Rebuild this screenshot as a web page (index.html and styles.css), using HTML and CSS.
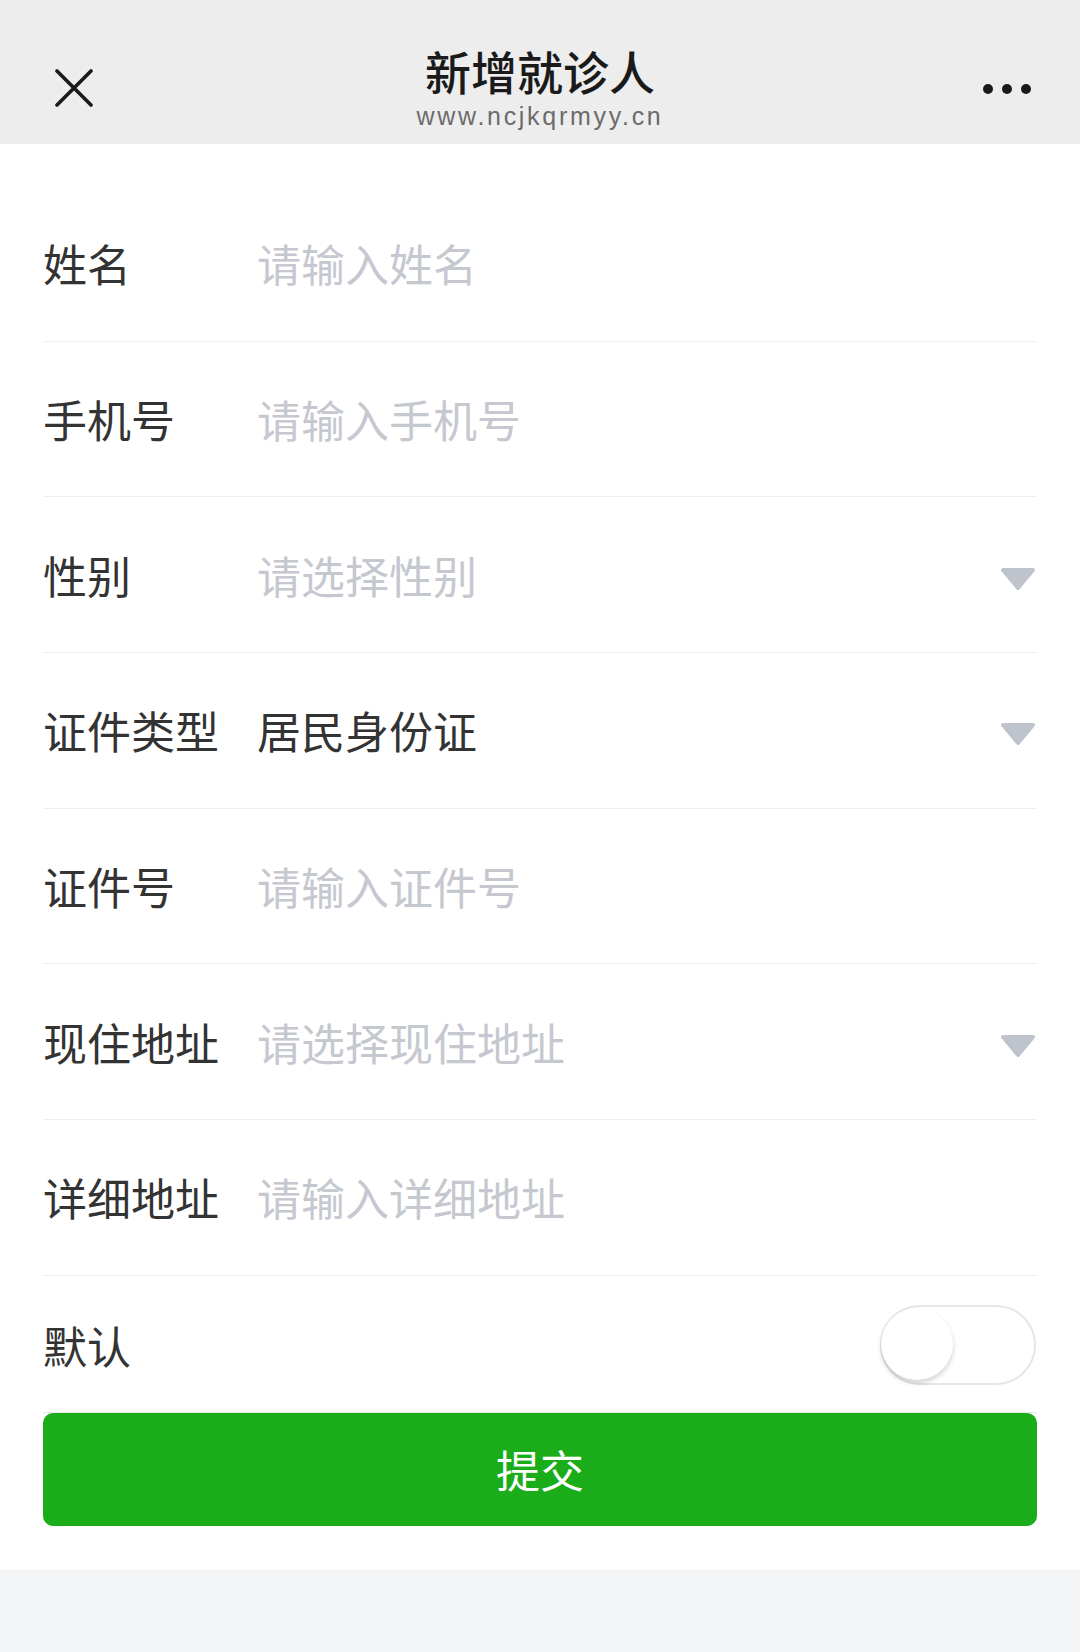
FILE: index.html
```html
<!DOCTYPE html>
<html lang="zh-CN">
<head>
    <meta charset="UTF-8">
    <meta name="viewport" content="width=device-width, initial-scale=1.0">
    <title>新增就诊人</title>
    <link rel="stylesheet" href="styles.css">
</head>
<body>
    <header class="nav">
        <div class="nav-left">
            <svg class="icon-close" width="38" height="38" viewBox="0 0 38 38">
                <path d="M2 2 L36 36 M36 2 L2 36" stroke="#1a1a1a" stroke-width="3.6" stroke-linecap="round" fill="none"/>
            </svg>
        </div>
        <div class="nav-title">
            <div class="title">新增就诊人</div>
            <div class="url">www.ncjkqrmyy.cn</div>
        </div>
        <div class="nav-right">
            <span class="dot"></span><span class="dot"></span><span class="dot"></span>
        </div>
    </header>

    <main class="page">
        <form class="form">
            <div class="row">
                <label class="label">姓名</label>
                <div class="value placeholder">请输入姓名</div>
            </div>
            <div class="row">
                <label class="label">手机号</label>
                <div class="value placeholder">请输入手机号</div>
            </div>
            <div class="row">
                <label class="label">性别</label>
                <div class="value placeholder">请选择性别</div>
                <svg class="arrow" width="36" height="24" viewBox="0 0 36 24"><path d="M3 3 L33 3 L18 21 Z"/></svg>
            </div>
            <div class="row">
                <label class="label">证件类型</label>
                <div class="value">居民身份证</div>
                <svg class="arrow" width="36" height="24" viewBox="0 0 36 24"><path d="M3 3 L33 3 L18 21 Z"/></svg>
            </div>
            <div class="row">
                <label class="label">证件号</label>
                <div class="value placeholder">请输入证件号</div>
            </div>
            <div class="row">
                <label class="label">现住地址</label>
                <div class="value placeholder">请选择现住地址</div>
                <svg class="arrow" width="36" height="24" viewBox="0 0 36 24"><path d="M3 3 L33 3 L18 21 Z"/></svg>
            </div>
            <div class="row">
                <label class="label">详细地址</label>
                <div class="value placeholder">请输入详细地址</div>
            </div>
            <div class="row row-switch">
                <label class="label">默认</label>
                <div class="value"></div>
                <div class="switch"><span class="knob"></span></div>
            </div>
            <button type="button" class="submit">提交</button>
        </form>
    </main>
</body>
</html>
```

FILE: styles.css
```css
body {
    margin: 0;
    background-color: #f4f5f7;
    font-family: "Noto Sans CJK SC", "Noto Sans", sans-serif;
}
.nav {
    display: grid;
    grid-template-columns: 1fr auto 1fr;
    align-items: center;
    height: 144px;
    box-sizing: border-box;
    padding-top: 32px;
    background-color: #ededed;
}
.nav-left {
    padding-left: 55px;
    display: flex;
}
.nav-title {
    align-self: start;
    margin-top: 12px;
    text-align: center;
}
.title {
    font-size: 46px;
    font-weight: 500;
    line-height: 52px;
    color: #1a1a1a;
}
.url {
    font-family: "Liberation Sans", Arial, sans-serif;
    font-size: 25px;
    letter-spacing: 2.7px;
    line-height: 40px;
    color: #6b6b6b;
}
.nav-right {
    display: flex;
    justify-content: flex-end;
    gap: 9px;
    padding-right: 49px;
    padding-top: 1px;
}
.dot {
    width: 10px;
    height: 10px;
    border-radius: 50%;
    background-color: #1a1a1a;
}
.page {
    background-color: white;
}
.form {
    margin: 0;
    padding: 42px 43px 44px;
}
.row {
    display: flex;
    align-items: center;
    height: 155.7px;
    box-sizing: border-box;
    border-bottom: 1px solid #eeeff3;
}
.label {
    width: 214px;
    flex-shrink: 0;
    font-size: 44px;
    color: #333;
}
.value {
    flex: 1;
    font-size: 44px;
    color: #333;
}
.placeholder {
    color: #c5c8cf;
}
.arrow {
    fill: #bfc3cb;
    stroke: #bfc3cb;
    stroke-width: 4;
    stroke-linejoin: round;
    margin-right: 1px;
    margin-top: 8px;
}
.row-switch {
    height: 137px;
    padding-top: 2px;
    border-bottom-color: #e8eaf0;
}
.switch {
    display: flex;
    align-items: flex-start;
    width: 156px;
    height: 80px;
    box-sizing: border-box;
    border: 2px solid #e6e6e6;
    border-radius: 40px;
    margin-right: 1px;
    margin-top: 0;
}
.knob {
    width: 72px;
    height: 72px;
    margin-left: -1px;
    margin-top: 1px;
    border-radius: 50%;
    background-color: white;
    box-shadow: 0 3px 5px rgba(0, 0, 0, 0.18);
}
.submit {
    display: block;
    width: 100%;
    height: 113px;
    border: none;
    border-radius: 10px;
    background-color: #1aad19;
    color: white;
    font-family: "Noto Sans CJK SC", "Noto Sans", sans-serif;
    font-size: 44px;
    cursor: pointer;
}
```
